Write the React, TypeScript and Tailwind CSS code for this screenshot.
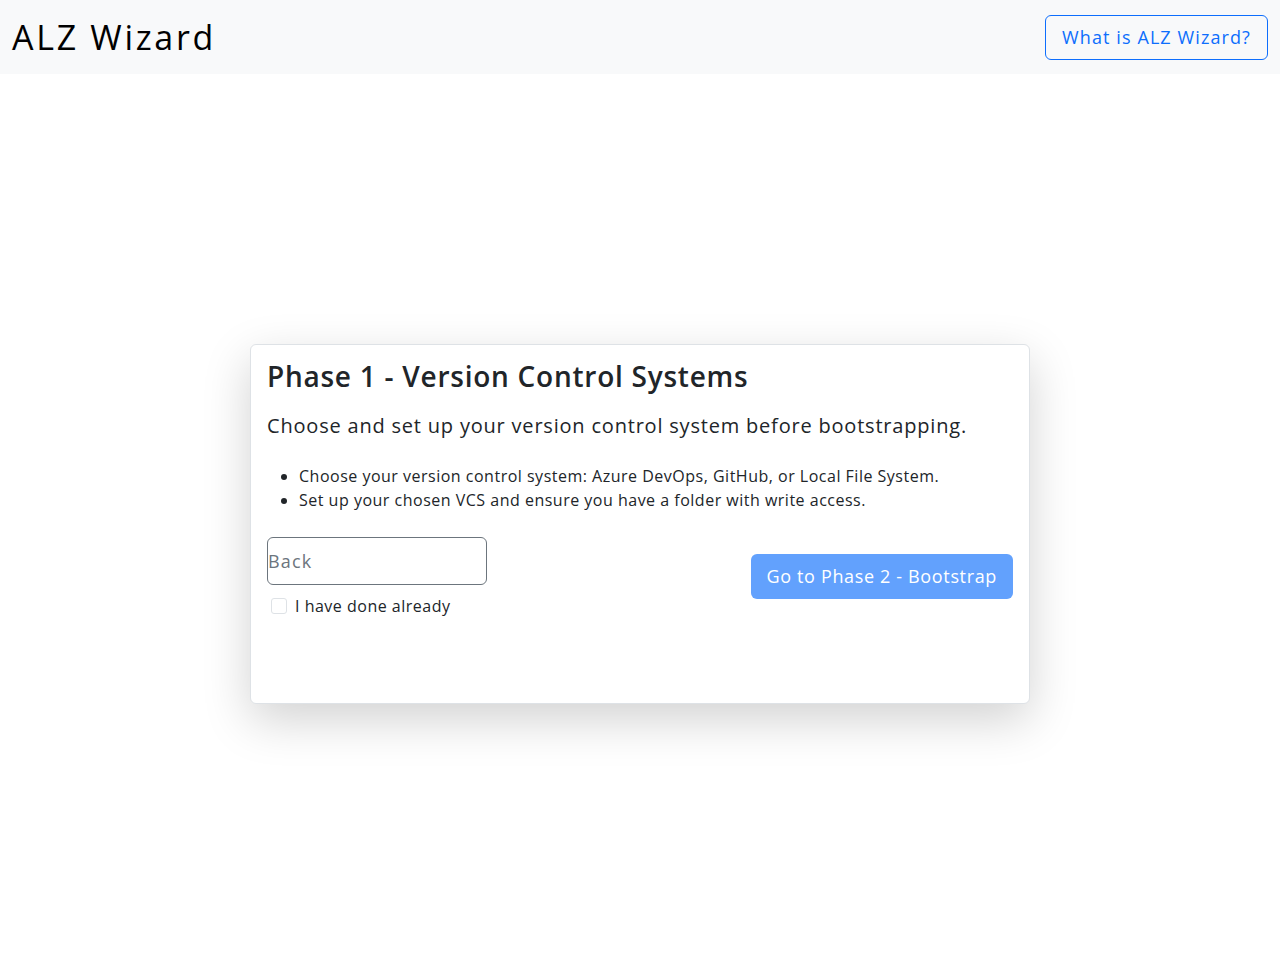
import { useState } from 'react';

const font = { fontFamily: '"Open Sans", "Liberation Sans", sans-serif' };

function Header() {
  return (
    <header className="flex h-[74px] items-center justify-between bg-[#f8f9fa] pl-3 pr-3">
      <h1 className="text-[34px] font-normal leading-none tracking-[2.7px] text-black">ALZ Wizard</h1>
      <button
        type="button"
        className="h-[45px] rounded-md border border-[#0d6efd] px-4 text-[18px] tracking-[1.1px] text-[#0d6efd]"
      >
        What is ALZ Wizard?
      </button>
    </header>
  );
}

export default function App() {
  const [done, setDone] = useState(false);

  return (
    <div className="min-h-[974px] bg-white text-[#212529]" style={font}>
      <Header />
      <main className="flex min-h-[900px] items-center justify-center">
        <div className="flex h-[360px] w-[780px] flex-col rounded-md border border-[#dee2e6] bg-white px-4 pt-[14px] shadow-[0_16px_48px_rgba(0,0,0,0.18)]">
          <h2 className="text-[28px] font-semibold leading-[34px] tracking-[0.75px]">
            Phase 1 - Version Control Systems
          </h2>
          <p className="mt-[18px] text-[20px] leading-[30px] tracking-[0.8px]">
            Choose and set up your version control system before bootstrapping.
          </p>
          <ul className="mt-[23px] list-disc pl-8 text-[16px] leading-6 tracking-[0.5px]">
            <li>Choose your version control system: Azure DevOps, GitHub, or Local File System.</li>
            <li>Set up your chosen VCS and ensure you have a folder with write access.</li>
          </ul>
          <div className="mt-[25px] flex items-center justify-between">
            <div className="flex flex-col">
              <input
                placeholder="Back"
                className="h-[48px] w-[220px] rounded-md border border-[#6c757d] text-[18px] tracking-[1.2px] outline-none placeholder:text-[#6c757d]"
              />
              <label className="mt-[11px] flex items-center gap-2 pl-1 text-[16px] leading-5 tracking-[0.5px]">
                <input
                  type="checkbox"
                  checked={done}
                  onChange={() => setDone(!done)}
                  className="h-4 w-4 appearance-none rounded-[3px] border border-[#dee2e6] bg-white"
                />
                I have done already
              </label>
            </div>
            <button
              type="button"
              className="h-[45px] rounded-md bg-[#62a1fd] px-4 text-[18px] tracking-[0.65px] text-white"
            >
              Go to Phase 2 - Bootstrap
            </button>
          </div>
        </div>
      </main>
    </div>
  );
}
